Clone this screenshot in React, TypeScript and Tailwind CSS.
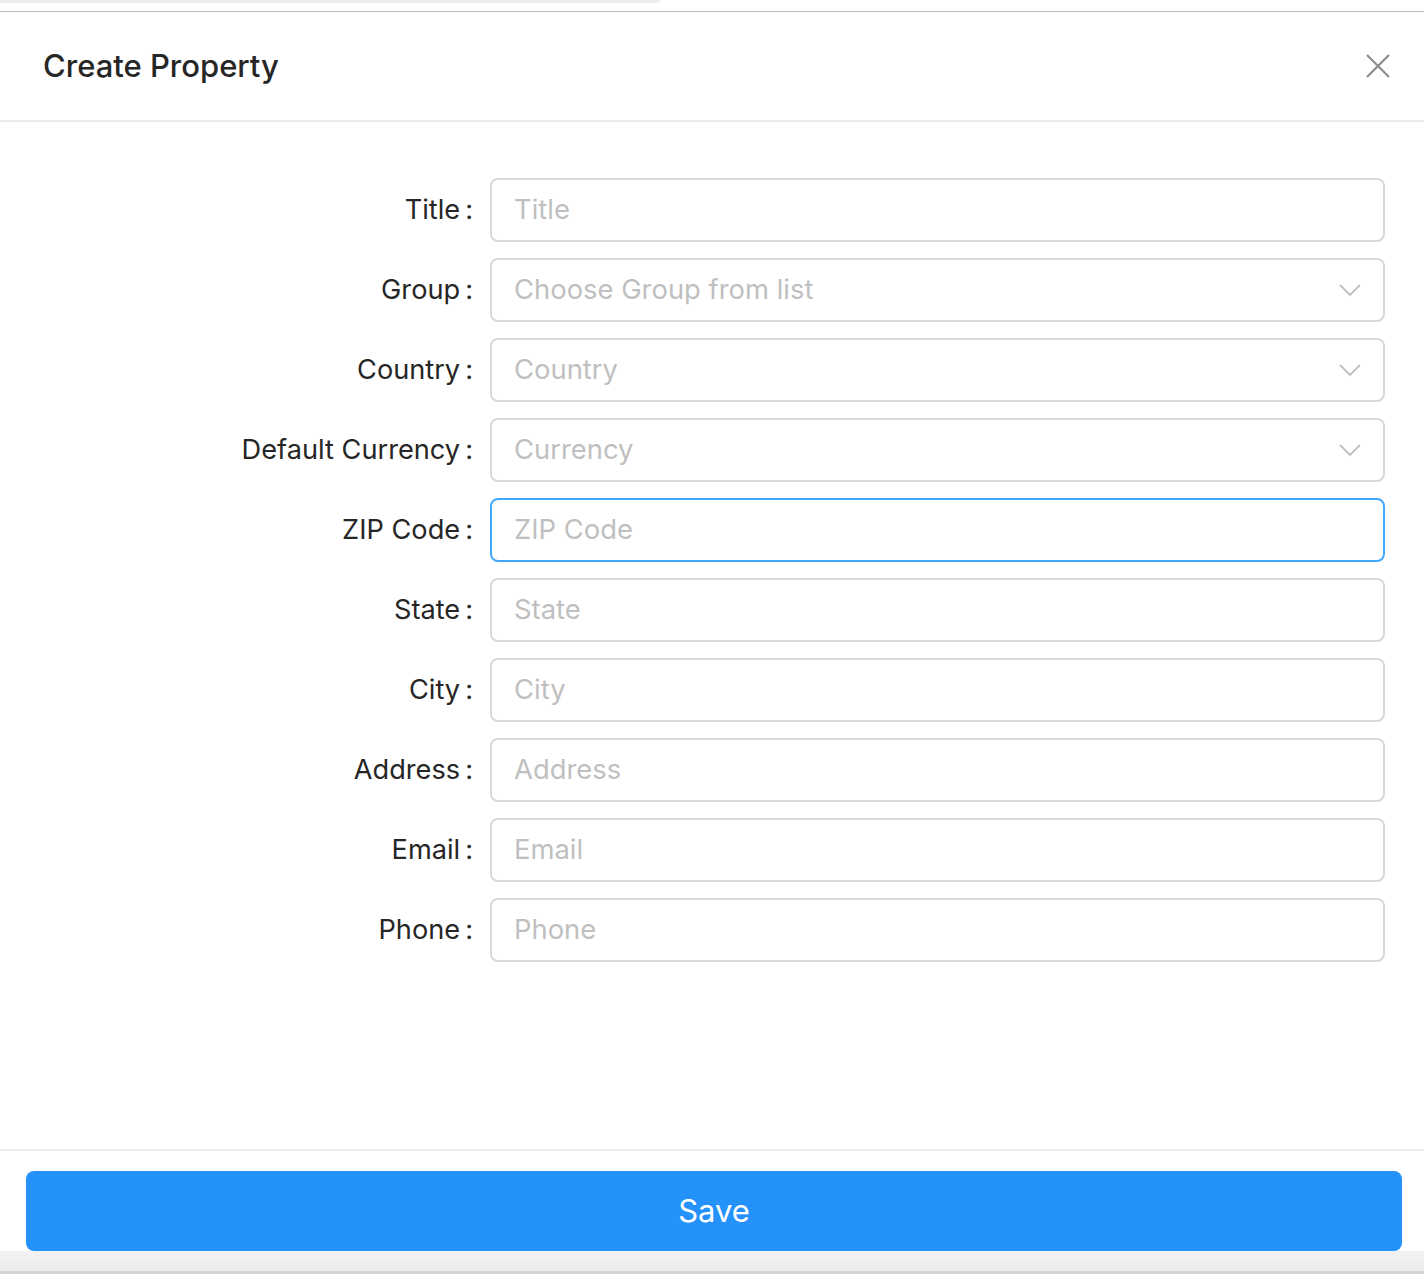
import React from 'react';

type Field = {
  label: string;
  placeholder: string;
  select?: boolean;
  focused?: boolean;
};

const fields: Field[] = [
  { label: 'Title', placeholder: 'Title' },
  { label: 'Group', placeholder: 'Choose Group from list', select: true },
  { label: 'Country', placeholder: 'Country', select: true },
  { label: 'Default Currency', placeholder: 'Currency', select: true },
  { label: 'ZIP Code', placeholder: 'ZIP Code', focused: true },
  { label: 'State', placeholder: 'State' },
  { label: 'City', placeholder: 'City' },
  { label: 'Address', placeholder: 'Address' },
  { label: 'Email', placeholder: 'Email' },
  { label: 'Phone', placeholder: 'Phone' },
];

function CloseIcon() {
  return (
    <svg width="24" height="24" viewBox="0 0 24 24" fill="none" stroke="#8c8c8c" strokeWidth="2.2">
      <path d="M1 1L23 23M23 1L1 23" />
    </svg>
  );
}

function ChevronDown() {
  return (
    <svg width="22" height="14" viewBox="0 0 22 14" fill="none" stroke="#bfbfbf" strokeWidth="1.8">
      <path d="M1 2L11 12L21 2" />
    </svg>
  );
}

function FormRow({ field }: { field: Field }) {
  return (
    <div className="flex items-center h-16">
      {/* Label */}
      <div className="w-[490px] shrink-0 flex justify-end items-center text-[27.2px] text-[#262626]">
        <span>{field.label}</span>
        <span className="ml-[5px] mr-[17px]">:</span>
      </div>

      {/* Input */}
      <div
        className={`flex-1 h-16 rounded-[8px] border-2 flex items-center justify-between pl-[22px] pr-[22px] ${
          field.focused ? 'border-[#40a9ff]' : 'border-[#d9d9d9]'
        }`}
      >
        <span className="text-[27.4px] text-[#bfbfbf]">{field.placeholder}</span>
        {field.select && <ChevronDown />}
      </div>
    </div>
  );
}

export default function App() {
  return (
    <div
      className="w-full h-[1274px] bg-white flex flex-col overflow-hidden"
      style={{ fontFamily: 'Inter, "Noto Sans", sans-serif' }}
    >
      {/* Top strip */}
      <div className="h-[11px] shrink-0">
        <div className="w-[660px] h-[3px] bg-[#eeeeee] rounded-br-[3px]" />
      </div>
      <div className="h-px bg-[#bcbcbc] shrink-0" />

      {/* Header */}
      <div className="h-[110px] shrink-0 flex items-center justify-between pl-[43px] pr-[34px] border-b-2 border-[#ebebeb]">
        <h1 className="text-[31px] font-medium text-[#262626]">Create Property</h1>
        <CloseIcon />
      </div>

      {/* Body */}
      <div className="flex-1 pt-[56px] pr-[39px] flex flex-col gap-4">
        {fields.map((f) => (
          <FormRow key={f.label} field={f} />
        ))}
      </div>

      {/* Footer */}
      <div className="shrink-0 border-t-2 border-[#ebebeb] pt-[20px]">
        <button className="ml-[26px] mr-[22px] w-[1376px] h-20 rounded-[8px] bg-[#2592fb] text-white text-[31px] flex items-center justify-center">
          Save
        </button>
        <div className="h-[20px] bg-gradient-to-b from-[#f3f3f3] to-[#ebebeb]" />
        <div className="h-[3px] bg-[#d6d3d0]" />
      </div>
    </div>
  );
}
